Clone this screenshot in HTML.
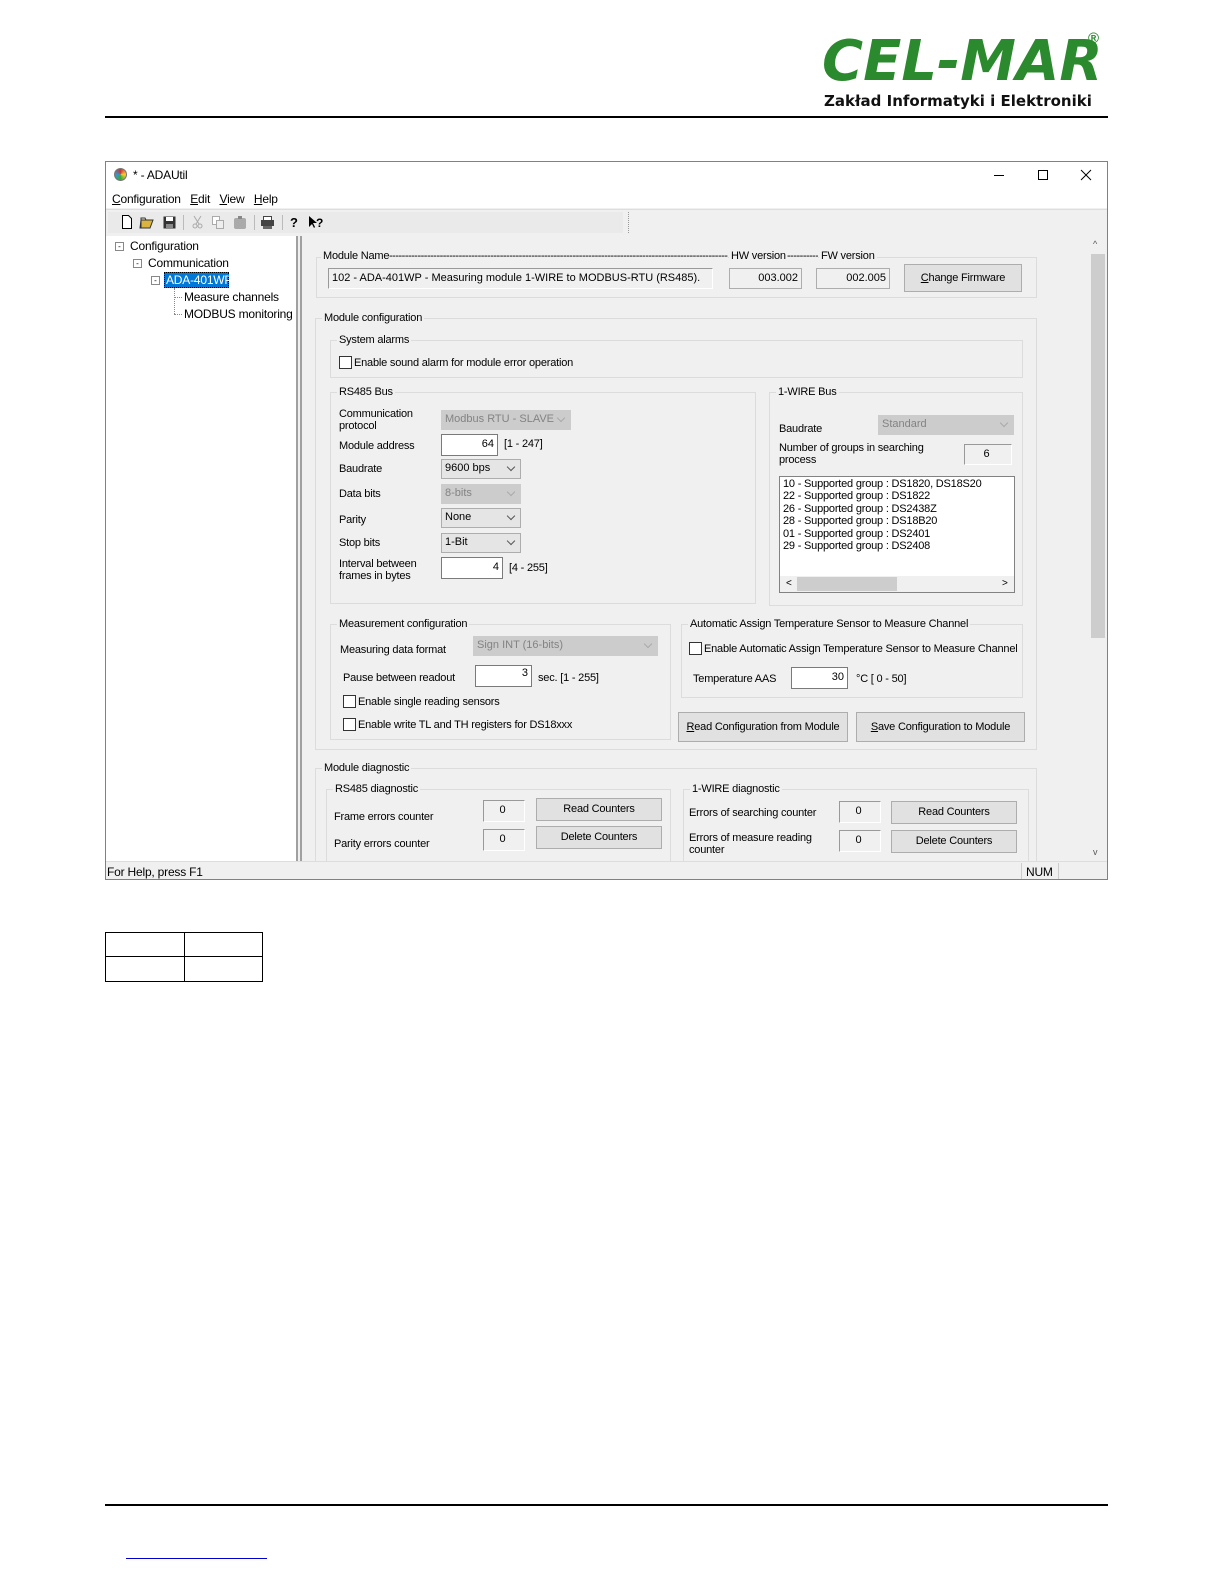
<!DOCTYPE html>
<html><head><meta charset="utf-8">
<style>
*{box-sizing:border-box;margin:0;padding:0}
html,body{width:1224px;height:1584px;overflow:hidden;background:#fff}
#w{position:relative;width:1224px;height:1584px;overflow:hidden;font-family:"Liberation Sans",sans-serif;font-size:11px;color:#000}
.a{position:absolute}
.t{position:absolute;white-space:nowrap;font-size:11px;line-height:12px;letter-spacing:-0.2px}
.g{position:absolute;border:1px solid #dcdcdc}
.gl{position:absolute;top:-7px;left:6px;background:#f0f0f0;padding:0 2px;white-space:nowrap;font-size:11px;line-height:12px;letter-spacing:-0.2px}
.in{position:absolute;background:#fff;border:1px solid #7a7a7a;text-align:right;padding-right:3px;font-size:11px;line-height:18px}
.ro{position:absolute;background:#f0f0f0;border:1px solid #adadad;text-align:right;padding-right:3px;font-size:11px;line-height:18px}
.cb{position:absolute;background:#e5e5e5;border:1px solid #adadad;padding-left:3px;font-size:11px;line-height:17px}
.cb.d{background:#ccc;border-color:#ccc;color:#838383}
.cb:after{content:"";position:absolute;right:6px;top:4px;width:5px;height:5px;border-right:1px solid #555;border-bottom:1px solid #555;transform:rotate(45deg)}
.cb.d:after{border-color:#aaa}
.btn{position:absolute;background:#e1e1e1;border:1px solid #adadad;text-align:center;font-size:11px;letter-spacing:-0.2px}
.chk{position:absolute;width:13px;height:13px;border:1px solid #333;background:#fff}
.dash{position:absolute;overflow:hidden;white-space:nowrap;font-size:11px;line-height:12px;background:#f0f0f0;letter-spacing:-0.5px}
</style></head><body><div id="w">

<!-- logo -->
<div class="a" style="left:822px;top:32px;font-family:'DejaVu Sans',sans-serif;font-weight:bold;font-style:italic;font-size:56px;line-height:60px;color:#2b8a2e;white-space:nowrap">CEL-MAR</div>
<div class="a" style="left:1088px;top:30px;font-size:15px;color:#2b8a2e;font-weight:bold">®</div>
<div class="a" style="left:824px;top:92px;font-family:'DejaVu Sans',sans-serif;font-weight:bold;font-size:15px;color:#111;white-space:nowrap">Zakład Informatyki i Elektroniki</div>
<div class="a" style="left:105px;top:116px;width:1003px;height:2px;background:#000"></div>

<!-- window -->
<div class="a" style="left:105px;top:161px;width:1003px;height:719px;border:1px solid #4a90c0;background:#f0f0f0"></div>
<div class="a" style="left:106px;top:162px;width:1001px;height:46px;background:#fff"></div>
<div class="a" style="left:114px;top:168px;width:13px;height:13px;border-radius:50%;background:conic-gradient(#c33,#fc3,#3a3,#39c,#c33);border:1px solid #777"></div>
<div class="t" style="left:133px;top:169px;font-size:12px">* - ADAUtil</div>
<svg class="a" style="left:990px;top:166px" width="110" height="20"><line x1="4" y1="9.5" x2="14" y2="9.5" stroke="#000"/><rect x="48.5" y="4.5" width="9" height="9" fill="none" stroke="#000"/><line x1="91" y1="4" x2="101" y2="14" stroke="#000"/><line x1="101" y1="4" x2="91" y2="14" stroke="#000"/></svg>
<div class="t" style="left:112px;top:193px;font-size:12px"><u>C</u>onfiguration&nbsp;&nbsp;&nbsp;<u>E</u>dit&nbsp;&nbsp;&nbsp;<u>V</u>iew&nbsp;&nbsp;&nbsp;<u>H</u>elp</div>
<!-- toolbar -->
<div class="a" style="left:106px;top:209px;width:1001px;height:26px;background:#f0f0f0;border-top:1px solid #ddd"></div>
<div class="a" style="left:108px;top:212px;width:515px;height:21px;background:#eaeaea"></div>
<div class="a" style="left:628px;top:212px;width:1px;height:21px;border-left:1px dotted #999"></div>
<svg class="a" style="left:115px;top:213px" width="215" height="18">
<path d="M7.5 2.5h6l3 3v10h-9z" fill="#fff" stroke="#000"/>
<path d="M26 7h12l-3 8h-10z" fill="#d9b440" stroke="#333"/><path d="M26 15V5h4l1 2" fill="none" stroke="#333"/>
<rect x="48.5" y="3.5" width="12" height="12" fill="#333"/><rect x="51" y="4" width="7" height="4" fill="#fff"/><rect x="51" y="11" width="7" height="4" fill="#888"/>
<line x1="68.5" y1="2" x2="68.5" y2="17" stroke="#bbb"/>
<path d="M79 3l5 8M86 3l-5 8" stroke="#aaa"/><circle cx="80" cy="13" r="2" fill="none" stroke="#aaa"/><circle cx="85" cy="13" r="2" fill="none" stroke="#aaa"/>
<rect x="97.5" y="3.5" width="7" height="8" fill="#fff" stroke="#aaa"/><rect x="101.5" y="7.5" width="7" height="8" fill="#eee" stroke="#aaa"/>
<rect x="119" y="5" width="12" height="11" rx="2" fill="#aaa"/><rect x="123" y="3" width="4" height="3" fill="#888"/>
<line x1="139.5" y1="2" x2="139.5" y2="17" stroke="#bbb"/>
<rect x="146" y="7" width="13" height="6" fill="#444"/><rect x="148.5" y="3.5" width="8" height="4" fill="#fff" stroke="#444"/><rect x="148" y="13" width="9" height="3" fill="#666"/>
<line x1="167.5" y1="2" x2="167.5" y2="17" stroke="#bbb"/>
<text x="175" y="14" font-family="Liberation Sans" font-weight="bold" font-size="13">?</text>
<path d="M194 3v11l3-3 2 4 1-1-2-4h4z" fill="#000"/><text x="201" y="14" font-family="Liberation Sans" font-weight="bold" font-size="12">?</text>
</svg>

<!-- tree -->
<div class="a" style="left:106px;top:236px;width:192px;height:625px;background:#fff;border-right:2px solid #a0a0a0"></div>
<div class="a" style="left:115px;top:242px;width:9px;height:9px;border:1px solid #888;font-size:8px;line-height:7px;text-align:center">-</div>
<div class="t" style="left:130px;top:240px;font-size:12px">Configuration</div>
<div class="a" style="left:133px;top:259px;width:9px;height:9px;border:1px solid #888;font-size:8px;line-height:7px;text-align:center">-</div>
<div class="t" style="left:148px;top:257px;font-size:12px">Communication</div>
<div class="a" style="left:151px;top:276px;width:9px;height:9px;border:1px solid #888;font-size:8px;line-height:7px;text-align:center">-</div>
<div class="a" style="left:164px;top:272px;width:65px;height:16px;background:#0078d7;border:1px dotted #000"></div>
<div class="t" style="left:166px;top:274px;font-size:12px;color:#fff">ADA-401WP</div>
<div class="a" style="left:174px;top:288px;width:1px;height:26px;border-left:1px dotted #888"></div>
<div class="a" style="left:174px;top:297px;width:8px;border-top:1px dotted #888"></div>
<div class="a" style="left:174px;top:314px;width:8px;border-top:1px dotted #888"></div>
<div class="t" style="left:184px;top:291px;font-size:12px">Measure channels</div>
<div class="t" style="left:184px;top:308px;font-size:12px">MODBUS monitoring</div>

<!-- panel border & scrollbar -->
<div class="a" style="left:300px;top:236px;width:2px;height:625px;background:#a0a0a0"></div>
<div class="a" style="left:1090px;top:236px;width:16px;height:625px;background:#f0f0f0"></div>
<div class="a" style="left:1091px;top:254px;width:14px;height:384px;background:#cdcdcd"></div>
<div class="t" style="left:1093px;top:238px;font-size:9px;color:#555">^</div>
<div class="t" style="left:1093px;top:846px;font-size:9px;color:#555">v</div>

<!-- Module Name -->
<div class="g" style="left:316px;top:257px;width:721px;height:41px"></div>
<div class="t" style="left:321px;top:250px;background:#f0f0f0;padding:0 2px">Module Name</div>
<div class="dash" style="left:389px;top:250px;width:339px">------------------------------------------------------------------------------------------------------------------------------------------------------</div>
<div class="t" style="left:729px;top:250px;background:#f0f0f0;padding:0 2px">HW version</div>
<div class="dash" style="left:787px;top:250px;width:31px">----------------</div>
<div class="t" style="left:819px;top:250px;background:#f0f0f0;padding:0 2px">FW version</div>
<div class="ro" style="left:328px;top:268px;width:385px;height:21px;text-align:left;padding-left:3px;border-color:#999 #fff #fff #999">102 - ADA-401WP - Measuring module 1-WIRE to MODBUS-RTU (RS485).</div>
<div class="ro" style="left:729px;top:268px;width:73px;height:21px">003.002</div>
<div class="ro" style="left:816px;top:268px;width:74px;height:21px">002.005</div>
<div class="btn" style="left:904px;top:264px;width:118px;height:28px;line-height:26px"><u>C</u>hange Firmware</div>

<!-- Module configuration -->
<div class="g" style="left:315px;top:318px;width:722px;height:432px"><span class="gl">Module configuration</span></div>
<div class="g" style="left:330px;top:340px;width:693px;height:38px"><span class="gl">System alarms</span></div>
<div class="chk" style="left:339px;top:356px"></div>
<div class="t" style="left:354px;top:357px">Enable sound alarm for module error operation</div>

<div class="g" style="left:330px;top:392px;width:426px;height:212px"><span class="gl">RS485 Bus</span></div>
<div class="t" style="left:339px;top:408px">Communication<br>protocol</div>
<div class="cb d" style="left:441px;top:410px;width:130px;height:20px">Modbus RTU - SLAVE</div>
<div class="t" style="left:339px;top:440px">Module address</div>
<div class="in" style="left:441px;top:434px;width:57px;height:22px">64</div>
<div class="t" style="left:504px;top:438px">[1 - 247]</div>
<div class="t" style="left:339px;top:463px">Baudrate</div>
<div class="cb" style="left:441px;top:459px;width:80px;height:20px">9600 bps</div>
<div class="t" style="left:339px;top:488px">Data bits</div>
<div class="cb d" style="left:441px;top:484px;width:80px;height:20px">8-bits</div>
<div class="t" style="left:339px;top:514px">Parity</div>
<div class="cb" style="left:441px;top:508px;width:80px;height:20px">None</div>
<div class="t" style="left:339px;top:537px">Stop bits</div>
<div class="cb" style="left:441px;top:533px;width:80px;height:20px">1-Bit</div>
<div class="t" style="left:339px;top:558px">Interval between<br>frames in bytes</div>
<div class="in" style="left:441px;top:557px;width:62px;height:22px">4</div>
<div class="t" style="left:509px;top:562px">[4 - 255]</div>

<div class="g" style="left:769px;top:392px;width:254px;height:214px"><span class="gl">1-WIRE Bus</span></div>
<div class="t" style="left:779px;top:423px">Baudrate</div>
<div class="cb d" style="left:878px;top:415px;width:136px;height:20px">Standard</div>
<div class="t" style="left:779px;top:442px">Number of groups in searching<br>process</div>
<div class="ro" style="left:964px;top:444px;width:48px;height:21px;text-align:center;border-color:#999 #fff #fff #999">6</div>
<div class="a" style="left:779px;top:476px;width:236px;height:117px;background:#fff;border:1px solid #828282"></div>
<div class="t" style="left:783px;top:478px;line-height:12.4px">10 - Supported group : DS1820, DS18S20<br>22 - Supported group : DS1822<br>26 - Supported group : DS2438Z<br>28 - Supported group : DS18B20<br>01 - Supported group : DS2401<br>29 - Supported group : DS2408</div>
<div class="a" style="left:780px;top:576px;width:234px;height:16px;background:#f0f0f0"></div>
<div class="a" style="left:797px;top:577px;width:100px;height:14px;background:#cdcdcd"></div>
<div class="t" style="left:786px;top:578px;font-size:10px">&lt;</div>
<div class="t" style="left:1002px;top:578px;font-size:10px">&gt;</div>

<div class="g" style="left:330px;top:624px;width:341px;height:116px"><span class="gl">Measurement configuration</span></div>
<div class="t" style="left:340px;top:644px">Measuring data format</div>
<div class="cb d" style="left:473px;top:636px;width:185px;height:20px">Sign INT (16-bits)</div>
<div class="t" style="left:343px;top:672px">Pause between readout</div>
<div class="in" style="left:475px;top:665px;width:57px;height:22px;line-height:14px">3</div>
<div class="t" style="left:538px;top:672px">sec. [1 - 255]</div>
<div class="chk" style="left:343px;top:695px"></div>
<div class="t" style="left:358px;top:696px">Enable single reading sensors</div>
<div class="chk" style="left:343px;top:718px"></div>
<div class="t" style="left:358px;top:719px">Enable write TL and TH registers for DS18xxx</div>

<div class="g" style="left:681px;top:624px;width:342px;height:74px"><span class="gl">Automatic Assign Temperature Sensor to Measure Channel</span></div>
<div class="chk" style="left:689px;top:642px"></div>
<div class="t" style="left:704px;top:643px">Enable Automatic Assign Temperature Sensor to Measure Channel</div>
<div class="t" style="left:693px;top:673px">Temperature AAS</div>
<div class="in" style="left:791px;top:667px;width:57px;height:22px;line-height:18px">30</div>
<div class="t" style="left:856px;top:673px">°C [ 0 - 50]</div>
<div class="btn" style="left:678px;top:712px;width:170px;height:30px;line-height:28px"><u>R</u>ead Configuration from Module</div>
<div class="btn" style="left:856px;top:712px;width:169px;height:30px;line-height:28px"><u>S</u>ave Configuration to Module</div>

<!-- Module diagnostic -->
<div class="g" style="left:315px;top:768px;width:722px;height:100px;border-bottom:none"><span class="gl">Module diagnostic</span></div>
<div class="g" style="left:326px;top:789px;width:345px;height:80px;border-bottom:none"><span class="gl">RS485 diagnostic</span></div>
<div class="t" style="left:334px;top:811px">Frame errors counter</div>
<div class="ro" style="left:483px;top:800px;width:42px;height:22px;text-align:center;border-color:#999 #fff #fff #999">0</div>
<div class="btn" style="left:536px;top:798px;width:126px;height:23px;line-height:21px">Read Counters</div>
<div class="t" style="left:334px;top:838px">Parity errors counter</div>
<div class="ro" style="left:483px;top:829px;width:42px;height:22px;text-align:center;border-color:#999 #fff #fff #999">0</div>
<div class="btn" style="left:536px;top:826px;width:126px;height:23px;line-height:21px">Delete Counters</div>
<div class="g" style="left:683px;top:789px;width:346px;height:80px;border-bottom:none"><span class="gl">1-WIRE diagnostic</span></div>
<div class="t" style="left:689px;top:807px">Errors of searching counter</div>
<div class="ro" style="left:839px;top:801px;width:42px;height:22px;text-align:center;border-color:#999 #fff #fff #999">0</div>
<div class="btn" style="left:891px;top:801px;width:126px;height:23px;line-height:21px">Read Counters</div>
<div class="t" style="left:689px;top:832px">Errors of measure reading<br>counter</div>
<div class="ro" style="left:839px;top:830px;width:42px;height:22px;text-align:center;border-color:#999 #fff #fff #999">0</div>
<div class="btn" style="left:891px;top:830px;width:126px;height:23px;line-height:21px">Delete Counters</div>

<!-- status bar -->
<div class="a" style="left:106px;top:861px;width:1001px;height:18px;background:#f0f0f0;border-top:1px solid #ddd"></div>
<div class="t" style="left:107px;top:866px;font-size:12px">For Help, press F1</div>
<div class="a" style="left:1021px;top:863px;width:1px;height:16px;background:#ccc"></div>
<div class="a" style="left:1058px;top:863px;width:1px;height:16px;background:#ccc"></div>
<div class="t" style="left:1026px;top:866px;font-size:12px">NUM</div>

<!-- small table -->
<div class="a" style="left:105px;top:932px;width:158px;height:50px;border:1px solid #000"></div>
<div class="a" style="left:184px;top:932px;width:1px;height:50px;background:#000"></div>
<div class="a" style="left:105px;top:956px;width:158px;height:1px;background:#000"></div>

<!-- footer -->
<div class="a" style="left:105px;top:1504px;width:1003px;height:2px;background:#000"></div>
<div class="a" style="left:126px;top:1558px;width:141px;height:1px;background:#00c"></div>
</div></body></html>
